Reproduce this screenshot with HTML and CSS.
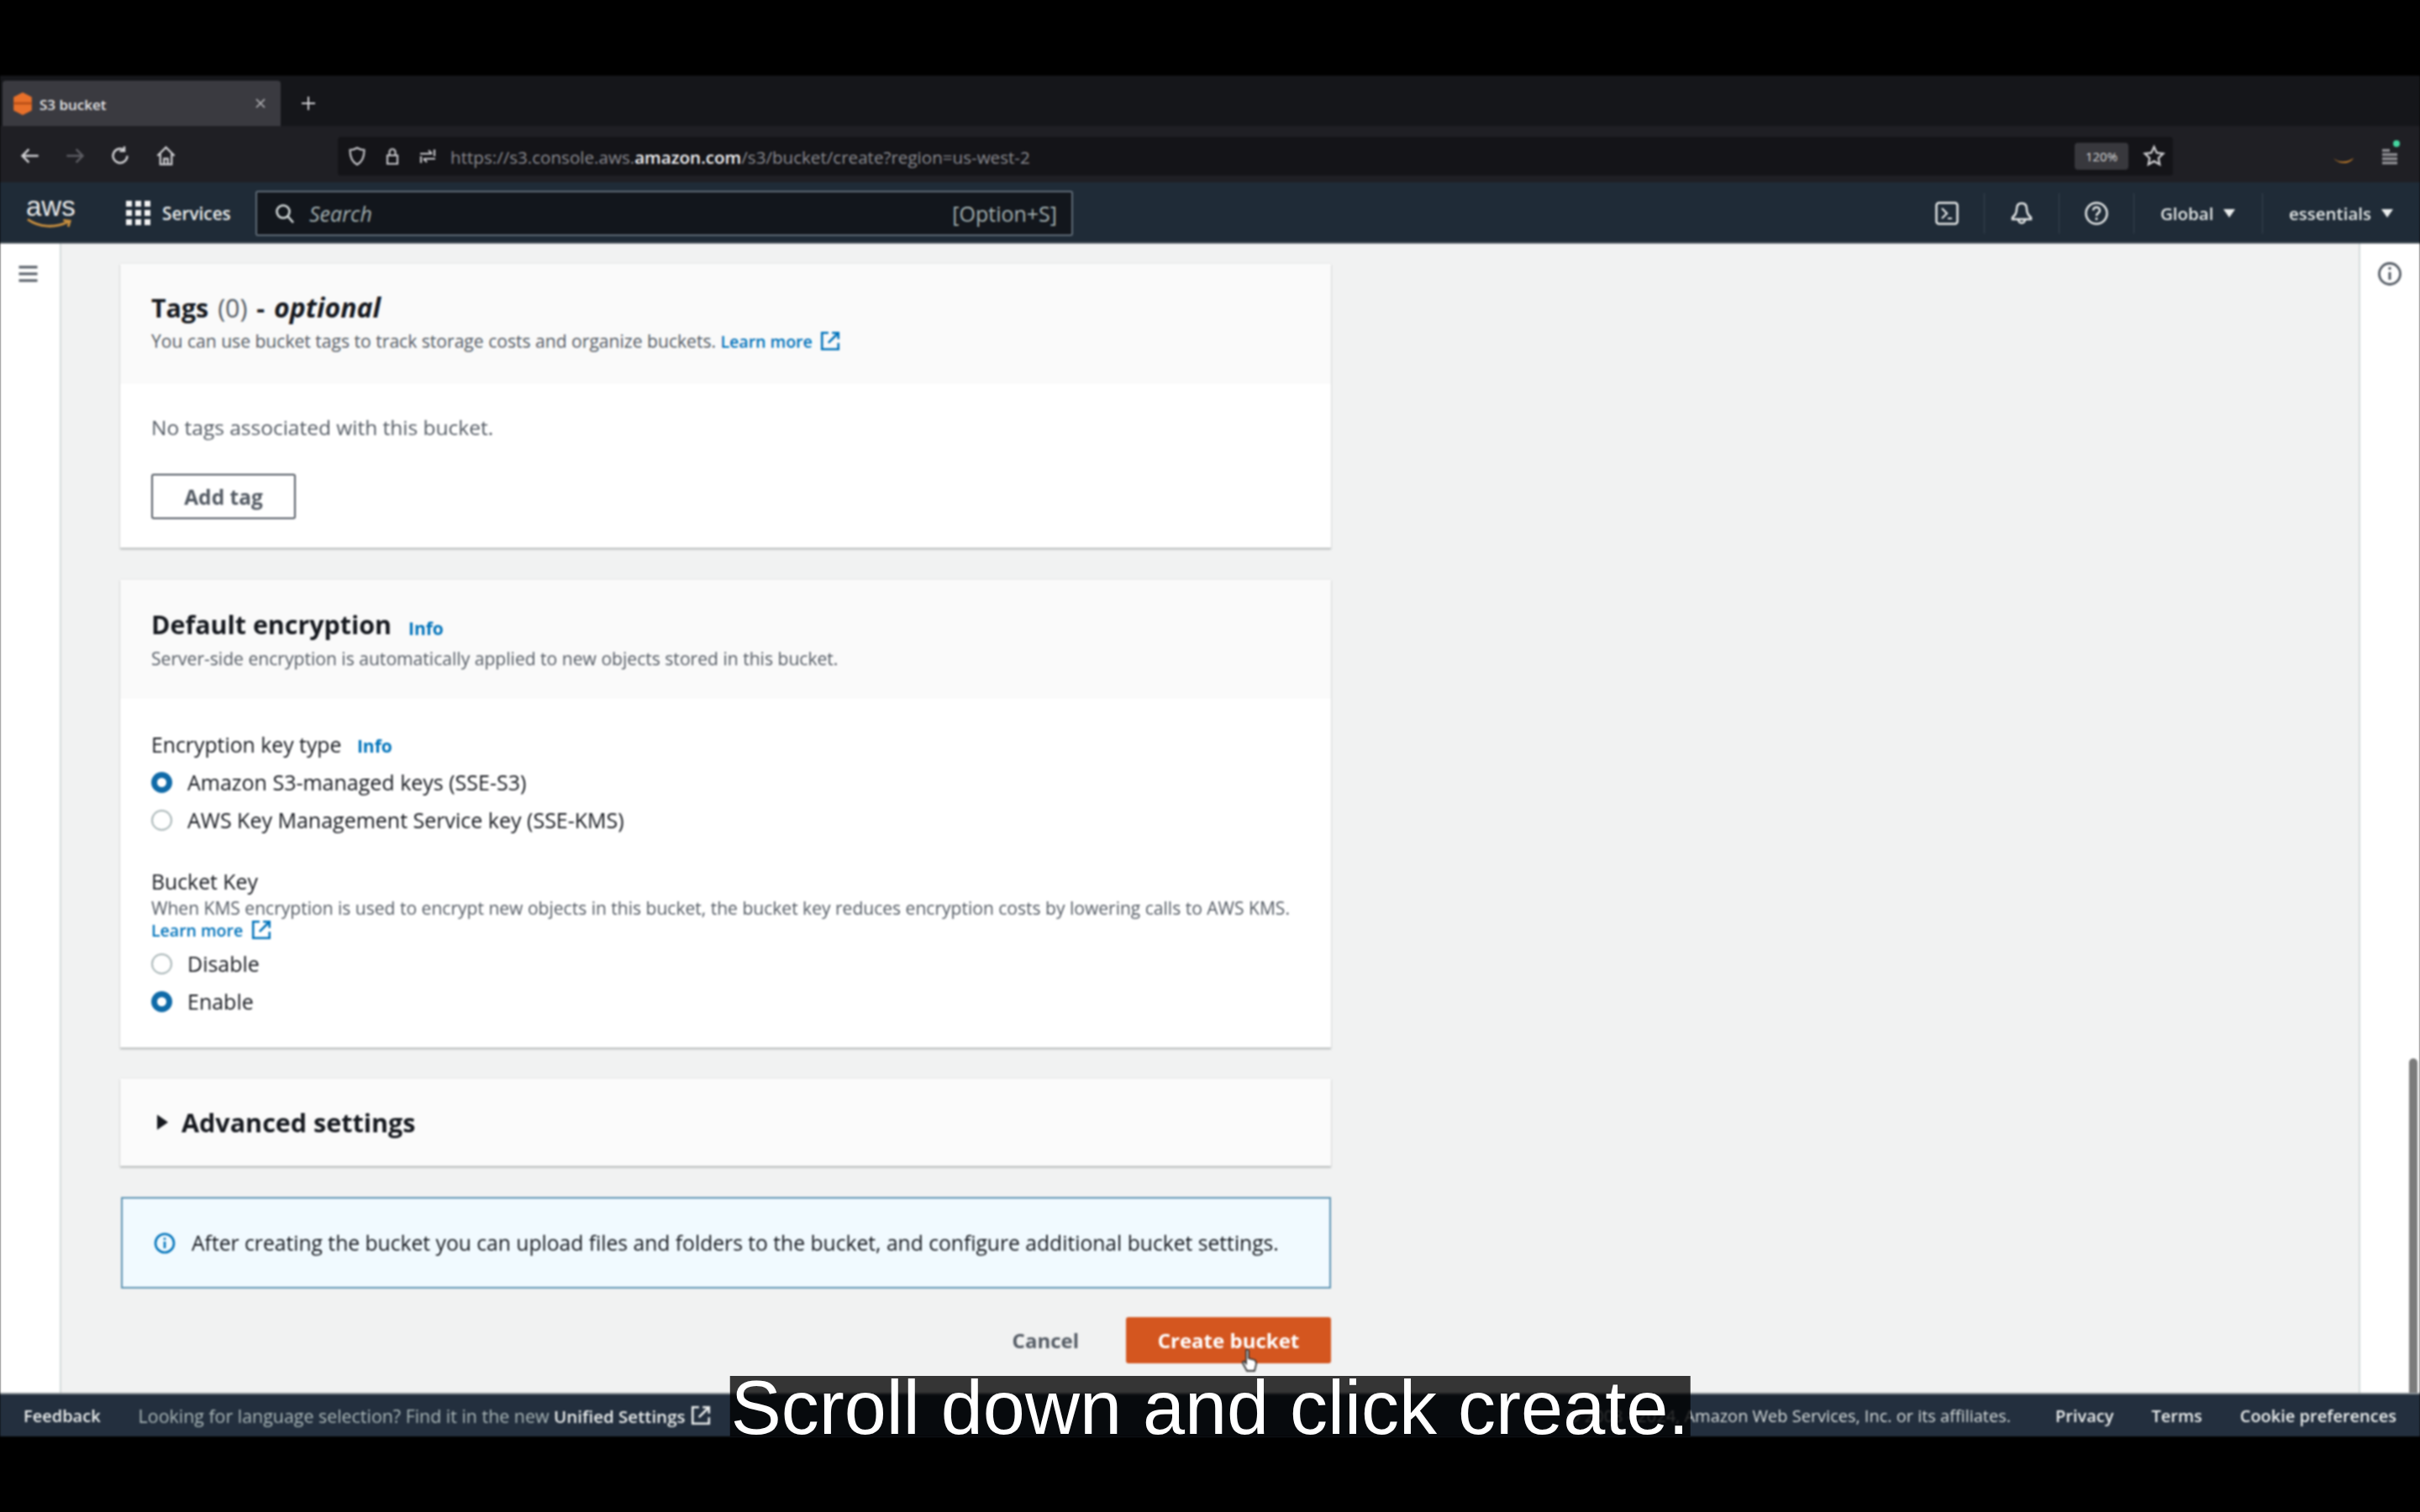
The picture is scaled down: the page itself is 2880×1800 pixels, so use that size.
FILE: index.html
```html
<!DOCTYPE html>
<html>
<head>
    <meta charset="UTF-8">
    <title>S3 bucket</title>
    <link rel="stylesheet" href="styles.css">
</head>
<body>
    <div class="screen">
        <div class="app">
            <div class="tabbar">
                <div class="tab">
                    <svg class="favicon" viewBox="0 0 24 30"><path d="M12 0 24 6v18l-12 6L0 24V6z" fill="#e8702a"/><path d="M0 13h24v3H0z" fill="#b84f17"/></svg>
                    <span class="tab-title">S3 bucket</span>
                    <svg class="tab-close" viewBox="0 0 12 12"><path d="M1 1l10 10M11 1 1 11" stroke="#b5b5b8" stroke-width="1.6"/></svg>
                </div>
                <svg class="tab-new" viewBox="0 0 18 18"><path d="M9 1v16M1 9h16" stroke="#d0d0d3" stroke-width="2"/></svg>
            </div>

            <div class="toolbar">
                <div class="nav-btns">
                    <svg class="tool-icon" viewBox="0 0 24 24"><path d="M21 12H4M11 5l-7 7 7 7" fill="none" stroke="#d0d0d3" stroke-width="2.2"/></svg>
                    <svg class="tool-icon" viewBox="0 0 24 24"><path d="M3 12h17M13 5l7 7-7 7" fill="none" stroke="#5c5c62" stroke-width="2.2"/></svg>
                    <svg class="tool-icon" viewBox="0 0 24 24"><path d="M19 12a7.500 7.500 0 1 1-3-6M16 2v5h-5" fill="none" stroke="#d0d0d3" stroke-width="2.2"/></svg>
                    <svg class="tool-icon" viewBox="0 0 24 24"><path d="M3 12l9-9 9 9M6 10v11h12V10M10 21v-6h4v6" fill="none" stroke="#d0d0d3" stroke-width="2"/></svg>
                </div>
                <div class="urlbar">
                    <svg class="url-icon" viewBox="0 0 24 24"><path d="M12 2c3 2 6 2.500 8.500 2.500 0 8-2 14-8.500 17.500C5.500 18.500 3.500 12.500 3.500 4.500 6 4.500 9 4 12 2z" fill="none" stroke="#c4c4c8" stroke-width="2.200"/></svg>
                    <svg class="url-icon" viewBox="0 0 24 24"><path d="M6 11h12v10H6zM8.500 11V7a3.500 3.500 0 0 1 7 0v4" fill="none" stroke="#c4c4c8" stroke-width="2.200"/></svg>
                    <svg class="url-icon" viewBox="0 0 24 24"><path d="M3 9h14M13 5l4 4M21 15H7M11 19l-4-4M20 4v8M4 12v8" fill="none" stroke="#c4c4c8" stroke-width="2.200"/></svg>
                    <span class="url">https://s3.console.aws.<b>amazon.com</b>/s3/bucket/create?region=us-west-2</span>
                    <span class="zoom-pill">120%</span>
                    <svg class="star" viewBox="0 0 24 24"><path d="M12 2.500l2.900 6.300 6.800.8-5 4.700 1.300 6.800-6-3.400-6 3.400 1.300-6.800-5-4.700 6.800-.8z" fill="none" stroke="#d0d0d3" stroke-width="2"/></svg>
                </div>
                <div class="addons">
                    <svg class="addon-smile" viewBox="0 0 26 10"><path d="M1 2c6 6 16 6 24 0-5 8-18 8-24 0z" fill="#d98a2a"/></svg>
                    <div class="addon-menu">
                        <span class="menu-dot"></span>
                        <svg viewBox="0 0 20 20"><path d="M1 3h9M1 8h18M1 13h18M1 18h18" stroke="#9a9a9e" stroke-width="3"/></svg>
                    </div>
                </div>
            </div>

            <div class="awsnav">
                <div class="aws-logo">
                    <span class="aws-word">aws</span>
                    <svg class="aws-smile" viewBox="0 0 58 14"><path d="M2 2c14 10 34 11 50 3M46 3l8 1-2 7" fill="none" stroke="#c98f3e" stroke-width="3"/></svg>
                </div>
                <div class="services">
                    <div class="grid-icon"><i></i><i></i><i></i><i></i><i></i><i></i><i></i><i></i><i></i></div>
                    <span>Services</span>
                </div>
                <div class="searchbox">
                    <svg class="search-icon" viewBox="0 0 24 24"><circle cx="10" cy="10" r="7.500" fill="none" stroke="#d5dbdb" stroke-width="2.600"/><path d="M15 15l7 8" stroke="#d5dbdb" stroke-width="2.600"/></svg>
                    <span class="search-hint">Search</span>
                    <span class="search-key">[Option+S]</span>
                </div>
                <div class="nav-right">
                    <div class="nav-cell">
                        <svg class="nav-icon" viewBox="0 0 30 30"><rect x="2.500" y="2.500" width="25" height="25" rx="3" fill="none" stroke="#e6e9e9" stroke-width="2.500"/><path d="M9 9l6 6-6 6M16 21h5" fill="none" stroke="#e6e9e9" stroke-width="2.200"/></svg>
                    </div>
                    <div class="nav-cell">
                        <svg class="nav-icon" viewBox="0 0 30 30"><path d="M15 3c-4 0-6 3-6 7 0 5-2 7-5 10v2h22v-2c-3-3-5-5-5-10 0-4-2-7-6-7zM11 22c0 6 8 6 8 0" fill="none" stroke="#e6e9e9" stroke-width="2.500"/></svg>
                    </div>
                    <div class="nav-cell">
                        <svg class="nav-icon" viewBox="0 0 30 30"><circle cx="15" cy="15" r="12.500" fill="none" stroke="#e6e9e9" stroke-width="2.500"/><path d="M11 11.500c0-5 8-5 8 0 0 3-4 3-4 6.500M15 20v3" fill="none" stroke="#e6e9e9" stroke-width="2.500"/></svg>
                    </div>
                    <div class="nav-menu nav-global">Global<span class="caret"></span></div>
                    <div class="nav-menu nav-user">essentials<span class="caret"></span></div>
                </div>
            </div>

            <div class="main">
                <div class="rail rail-left">
                    <svg class="rail-icon" viewBox="0 0 24 24"><path d="M1 4h22M1 12h22M1 20h22" stroke="#545b64" stroke-width="3"/></svg>
                </div>

                <div class="content">
                    <section class="card card-tags">
                        <div class="card-head head-tags">
                            <h2 class="card-title">Tags <span class="count">(0)</span> - <em>optional</em></h2>
                            <p class="card-desc tags-desc">You can use bucket tags to track storage costs and organize buckets. <a class="link">Learn more</a>
                                <svg class="ext" viewBox="0 0 24 24"><path d="M10 3H3v18h18v-7M14 3h7v7M21 3 10 14" fill="none" stroke="#0073bb" stroke-width="2.400"/></svg>
                            </p>
                        </div>
                        <div class="card-body body-tags">
                            <p class="empty">No tags associated with this bucket.</p>
                            <button class="btn-outline">Add tag</button>
                        </div>
                    </section>

                    <section class="card card-enc">
                        <div class="card-head head-enc">
                            <h2 class="card-title">Default encryption <a class="info info-big">Info</a></h2>
                            <p class="card-desc">Server-side encryption is automatically applied to new objects stored in this bucket.</p>
                        </div>
                        <div class="card-body body-enc">
                            <div class="field-label label-type">Encryption key type <a class="info">Info</a></div>
                            <div class="radio on">Amazon S3-managed keys (SSE-S3)</div>
                            <div class="radio">AWS Key Management Service key (SSE-KMS)</div>
                            <div class="field-label label-key">Bucket Key</div>
                            <p class="field-desc">When KMS encryption is used to encrypt new objects in this bucket, the bucket key reduces encryption costs by lowering calls to AWS KMS.<br>
                                <a class="link">Learn more</a>
                                <svg class="ext" viewBox="0 0 24 24"><path d="M10 3H3v18h18v-7M14 3h7v7M21 3 10 14" fill="none" stroke="#0073bb" stroke-width="2.400"/></svg>
                            </p>
                            <div class="radio radio-tight">Disable</div>
                            <div class="radio on">Enable</div>
                        </div>
                    </section>

                    <section class="card card-adv">
                        <span class="adv-arrow"></span>
                        <h2 class="adv-title">Advanced settings</h2>
                    </section>

                    <div class="alert">
                        <svg class="alert-icon" viewBox="0 0 26 26"><circle cx="13" cy="13" r="11" fill="none" stroke="#0073bb" stroke-width="2.600"/><path d="M13 11v8M13 6.500v2.500" stroke="#0073bb" stroke-width="2.600"/></svg>
                        <span>After creating the bucket you can upload files and folders to the bucket, and configure additional bucket settings.</span>
                    </div>

                    <div class="actions">
                        <span class="btn-cancel">Cancel</span>
                        <button class="btn-primary">Create bucket</button>
                    </div>
                </div>

                <div class="rail rail-right">
                    <svg class="rail-icon rail-info" viewBox="0 0 30 30"><circle cx="15" cy="15" r="12.500" fill="none" stroke="#545b64" stroke-width="2.800"/><path d="M15 13v9M15 7v3" stroke="#545b64" stroke-width="3"/></svg>
                </div>
                <div class="scroll-thumb"></div>
            </div>

            <div class="footer">
                <span class="foot-link foot-feedback">Feedback</span>
                <span class="foot-note">Looking for language selection? Find it in the new <b>Unified Settings</b></span>
                <svg class="foot-ext" viewBox="0 0 24 24"><path d="M10 3H3v18h18v-7M14 3h7v7M21 3 10 14" fill="none" stroke="#eaeded" stroke-width="2.400"/></svg>
                <div class="foot-right">
                    <span class="foot-copy">© 2008 - 2024, Amazon Web Services, Inc. or its affiliates.</span>
                    <span class="foot-link">Privacy</span>
                    <span class="foot-link">Terms</span>
                    <span class="foot-link">Cookie preferences</span>
                </div>
            </div>

            <svg class="cursor" viewBox="0 0 20 30"><path d="M6 2c2-1 3 0 3 2v8l7 2c2 1 2 3 2 5l-2 8H7l-5-9c-1-2 1-3 2-2l2 2z" fill="#fff" stroke="#333" stroke-width="1.800"/></svg>
        </div>

        <div class="caption">Scroll down and click create.</div>
    </div>
</body>
</html>
```

FILE: styles.css
```css
* {
    box-sizing: border-box;
}

body {
    margin: 0;
    background-color: #000;
    font-family: "Open Sans", "Noto Sans", sans-serif;
    color: #16191f;
}

h2, p {
    margin: 0;
}

.screen {
    position: relative;
    height: 1800px;
    padding-top: 90px;
    padding-bottom: 90px;
    overflow: hidden;
}

.app {
    position: relative;
    height: 1620px;
    display: flex;
    flex-direction: column;
    filter: blur(1px);
}

/* browser chrome */
.tabbar {
    height: 60px;
    background-color: #15161a;
    display: flex;
    align-items: center;
    padding: 6px 0 0 3px;
}

.tab {
    width: 331px;
    height: 54px;
    background-color: #3a3a40;
    border-radius: 4px 4px 0 0;
    display: flex;
    align-items: center;
    padding-left: 12px;
}

.favicon {
    width: 24px;
    height: 27px;
}

.tab-title {
    margin-left: 8px;
    margin-top: 2px;
    font-size: 17px;
    font-weight: 600;
    color: #e4e4e6;
    flex: 1;
}

.tab-close {
    width: 12px;
    height: 12px;
    margin-right: 18px;
}

.tab-new {
    width: 18px;
    height: 18px;
    margin-left: 24px;
}

.toolbar {
    height: 67px;
    background-color: #1f1f24;
    display: flex;
    align-items: center;
    padding-top: 4px;
}

.nav-btns {
    width: 402px;
    padding-left: 22px;
    display: flex;
    gap: 27px;
}

.tool-icon {
    width: 27px;
    height: 27px;
}

.urlbar {
    width: 2184px;
    height: 46px;
    background-color: #141418;
    border-radius: 4px;
    display: flex;
    align-items: center;
    padding-left: 11px;
    gap: 18px;
}

.url-icon {
    width: 24px;
    height: 26px;
}

.url {
    font-size: 20.6px;
    color: #8a8a90;
    flex: 1;
    margin-left: -3px;
    margin-top: 2px;
}

.url b {
    color: #f2f2f4;
    font-weight: 600;
}

.zoom-pill {
    width: 64px;
    height: 32px;
    line-height: 32px;
    background-color: #38383d;
    border-radius: 4px;
    text-align: center;
    font-size: 15px;
    color: #d8d8da;
    margin-right: -1px;
}

.star {
    width: 27px;
    height: 27px;
    margin-right: 9px;
}

.addons {
    flex: 1;
    display: flex;
    align-items: center;
    justify-content: flex-end;
    padding-right: 26px;
    gap: 32px;
}

.addon-smile {
    width: 26px;
    height: 10px;
    margin-top: 10px;
}

.addon-menu {
    position: relative;
    width: 20px;
    height: 20px;
}

.addon-menu svg {
    width: 20px;
    height: 20px;
    display: block;
}

.menu-dot {
    position: absolute;
    top: -9px;
    right: -2px;
    width: 8px;
    height: 8px;
    border-radius: 50%;
    background-color: #45d6a0;
}

/* aws top bar */
.awsnav {
    height: 73px;
    background-color: #1f2b37;
    border-bottom: 2px solid #4a545c;
    padding-top: 2px;
    display: flex;
    align-items: center;
    color: #eaeded;
}

.aws-logo {
    width: 150px;
    padding-left: 31px;
    display: flex;
    flex-direction: column;
}

.aws-word {
    font-family: "Liberation Sans", sans-serif;
    font-size: 33px;
    line-height: 24px;
    color: #e8e8e8;
}

.aws-smile {
    width: 56px;
    height: 14px;
    margin-top: 1px;
}

.services {
    width: 154px;
    display: flex;
    align-items: center;
    gap: 13px;
    font-size: 20.8px;
    font-weight: 600;
}

.grid-icon {
    width: 30px;
    height: 30px;
    display: grid;
    grid-template-columns: repeat(3, 7px);
    grid-template-rows: repeat(3, 7px);
    gap: 4px;
}

.grid-icon i {
    background-color: #f2f2f2;
}

.searchbox {
    width: 973px;
    height: 54px;
    background-color: #12161c;
    border: 2px solid #5f6b76;
    border-radius: 3px;
    display: flex;
    align-items: center;
    padding: 0 17px 0 21px;
}

.search-icon {
    width: 24px;
    height: 24px;
}

.search-hint {
    margin-left: 17px;
    font-size: 25px;
    font-style: italic;
    color: #a3b0b1;
    flex: 1;
}

.search-key {
    font-size: 25px;
    color: #a3b0b1;
}

.nav-right {
    flex: 1;
    display: flex;
    justify-content: flex-end;
    align-items: center;
    height: 52px;
    padding-right: 32px;
}

.nav-cell {
    width: 89px;
    display: flex;
    justify-content: center;
    border-right: 1px solid #36424e;
    height: 48px;
    align-items: center;
}

.nav-icon {
    width: 30px;
    height: 30px;
}

.nav-menu {
    font-size: 20.5px;
    font-weight: 600;
    display: flex;
    align-items: center;
    color: #e2e6e6;
}

.nav-global {
    width: 153px;
    padding-left: 31px;
    height: 48px;
    border-right: 1px solid #36424e;
}

.nav-user {
    padding-left: 31px;
}

.caret {
    width: 0;
    height: 0;
    margin-left: 12px;
    border-left: 7px solid transparent;
    border-right: 7px solid transparent;
    border-top: 10px solid #eaeded;
}

/* page */
.main {
    position: relative;
    height: 1368px;
    display: flex;
    background-color: #f1f2f2;
}

.rail {
    width: 73px;
    background-color: #fff;
    padding-top: 24px;
    text-align: center;
}

.rail-left {
    border-right: 2px solid #d5dbdb;
    padding-right: 4px;
}

.rail-right {
    border-left: 2px solid #d5dbdb;
}

.rail-icon {
    width: 27px;
    height: 24px;
}

.rail-info {
    width: 30px;
    height: 30px;
    margin-top: -3px;
    margin-right: 2px;
}

.content {
    flex: 1;
    padding: 24px 0 0 70px;
}

.card {
    width: 1441px;
    background-color: #fff;
    box-shadow: 0 2px 2px #b4b8b8, 0 0 2px rgba(0, 0, 0, 0.12);
}

.card-head {
    background-color: #fafafa;
    padding-left: 37px;
}

.card-title {
    font-size: 30.4px;
    font-weight: 700;
    line-height: 42px;
    color: #16191f;
}

.head-tags .card-title {
    word-spacing: 3px;
}

.card-title .count {
    font-weight: 400;
    color: #545b64;
}

.card-title em {
    font-size: 32px;
}

.card-desc {
    font-size: 21.1px;
    line-height: 30px;
    color: #545b64;
}

.tags-desc {
    margin-top: 3px;
}

.link {
    color: #0073bb;
    font-size: 19.5px;
    font-weight: 600;
}

.ext {
    width: 26px;
    height: 26px;
    vertical-align: -5px;
    margin-left: 3px;
}

.head-tags {
    height: 143px;
    padding-top: 31px;
}

.body-tags {
    height: 195px;
    padding: 36px 0 0 37px;
}

.empty {
    font-size: 24.5px;
    line-height: 32px;
    color: #545b64;
}

.btn-outline {
    display: block;
    width: 172px;
    height: 54px;
    margin-top: 39px;
    background-color: #fff;
    border: 2px solid #545b64;
    border-radius: 3px;
    font-family: inherit;
    font-size: 24.5px;
    font-weight: 700;
    color: #545b64;
}

.card-enc {
    margin-top: 38px;
}

.head-enc {
    height: 142px;
    padding-top: 33px;
}

.info {
    color: #0073bb;
    font-size: 21px;
    font-weight: 700;
    margin-left: 12px;
}

.info-big {
    vertical-align: -1px;
}

.body-enc {
    height: 415px;
    padding: 36px 37px 0;
}

.field-label {
    font-size: 24.8px;
    line-height: 34px;
    color: #16191f;
}

.label-type {
    margin-top: 1px;
    margin-bottom: 4px;
}

.label-key {
    margin-top: 33px;
}

.field-desc {
    font-size: 21.05px;
    line-height: 26px;
    color: #545b64;
    margin-top: 2px;
}

.radio {
    position: relative;
    height: 45px;
    line-height: 45px;
    padding-left: 43px;
    font-size: 25px;
    color: #16191f;
}

.radio::before {
    content: "";
    position: absolute;
    box-sizing: border-box;
    left: 0;
    top: 10px;
    width: 25px;
    height: 25px;
    border-radius: 50%;
    border: 2px solid #aab7b8;
    background-color: #fff;
}

.radio.on::before {
    border: 7px solid #0f6aa8;
}

.radio-tight {
    margin-top: 4px;
}

.card-adv {
    margin-top: 37px;
    height: 104px;
    background-color: #fbfbfb;
    display: flex;
    align-items: center;
    padding-left: 44px;
}

.adv-arrow {
    width: 0;
    height: 0;
    border-top: 9px solid transparent;
    border-bottom: 9px solid transparent;
    border-left: 13px solid #16191f;
}

.adv-title {
    margin-left: 16px;
    font-size: 30.5px;
    font-weight: 700;
}

.alert {
    width: 1440px;
    height: 109px;
    margin-top: 37px;
    margin-left: 1px;
    background-color: #f1faff;
    border: 2px solid #5e94b3;
    display: flex;
    align-items: center;
    padding-left: 37px;
    font-size: 24.67px;
    font-weight: 500;
    color: #16191f;
}

.alert-icon {
    width: 26px;
    height: 26px;
    margin-right: 19px;
}

.actions {
    width: 1441px;
    margin-top: 34px;
    display: flex;
    justify-content: flex-end;
    align-items: center;
}

.btn-cancel {
    font-size: 24px;
    font-weight: 700;
    color: #545b64;
    margin-right: 56px;
}

.btn-primary {
    width: 244px;
    height: 55px;
    background-color: #d4561f;
    border: none;
    border-radius: 3px;
    font-family: inherit;
    font-size: 24px;
    font-weight: 700;
    color: #fff;
}

.scroll-thumb {
    position: absolute;
    right: 3px;
    top: 970px;
    bottom: 0;
    width: 10px;
    border-radius: 5px 5px 0 0;
    background-color: #7b7b7b;
}

.cursor {
    position: absolute;
    left: 1477px;
    top: 1515px;
    width: 20px;
    height: 30px;
}

/* footer */
.footer {
    flex: 1;
    background-color: #232f3e;
    border-top: 2px solid #8a9196;
    display: flex;
    align-items: center;
    padding-left: 28px;
    font-size: 20px;
    color: #aab7b8;
}

.foot-link {
    color: #eaeded;
    font-weight: 600;
}

.foot-note {
    margin-left: 45px;
    font-size: 21.4px;
}

.foot-note b {
    color: #eaeded;
    font-size: 20.5px;
    font-weight: 600;
}

.foot-ext {
    width: 26px;
    height: 26px;
    margin-left: 6px;
}

.foot-right {
    margin-left: auto;
    padding-right: 28px;
    display: flex;
    gap: 45px;
}

.foot-copy {
    color: #d5dbdb;
    margin-right: 8px;
}

/* video subtitle */
.caption {
    position: absolute;
    left: 50%;
    top: 1638px;
    transform: translateX(-50%);
    height: 72px;
    line-height: 76px;
    padding: 0 1px;
    white-space: nowrap;
    font-family: "Liberation Sans", Arial, sans-serif;
    font-size: 90px;
    color: #fff;
    background-color: rgba(0, 0, 0, 0.78);
}
```
